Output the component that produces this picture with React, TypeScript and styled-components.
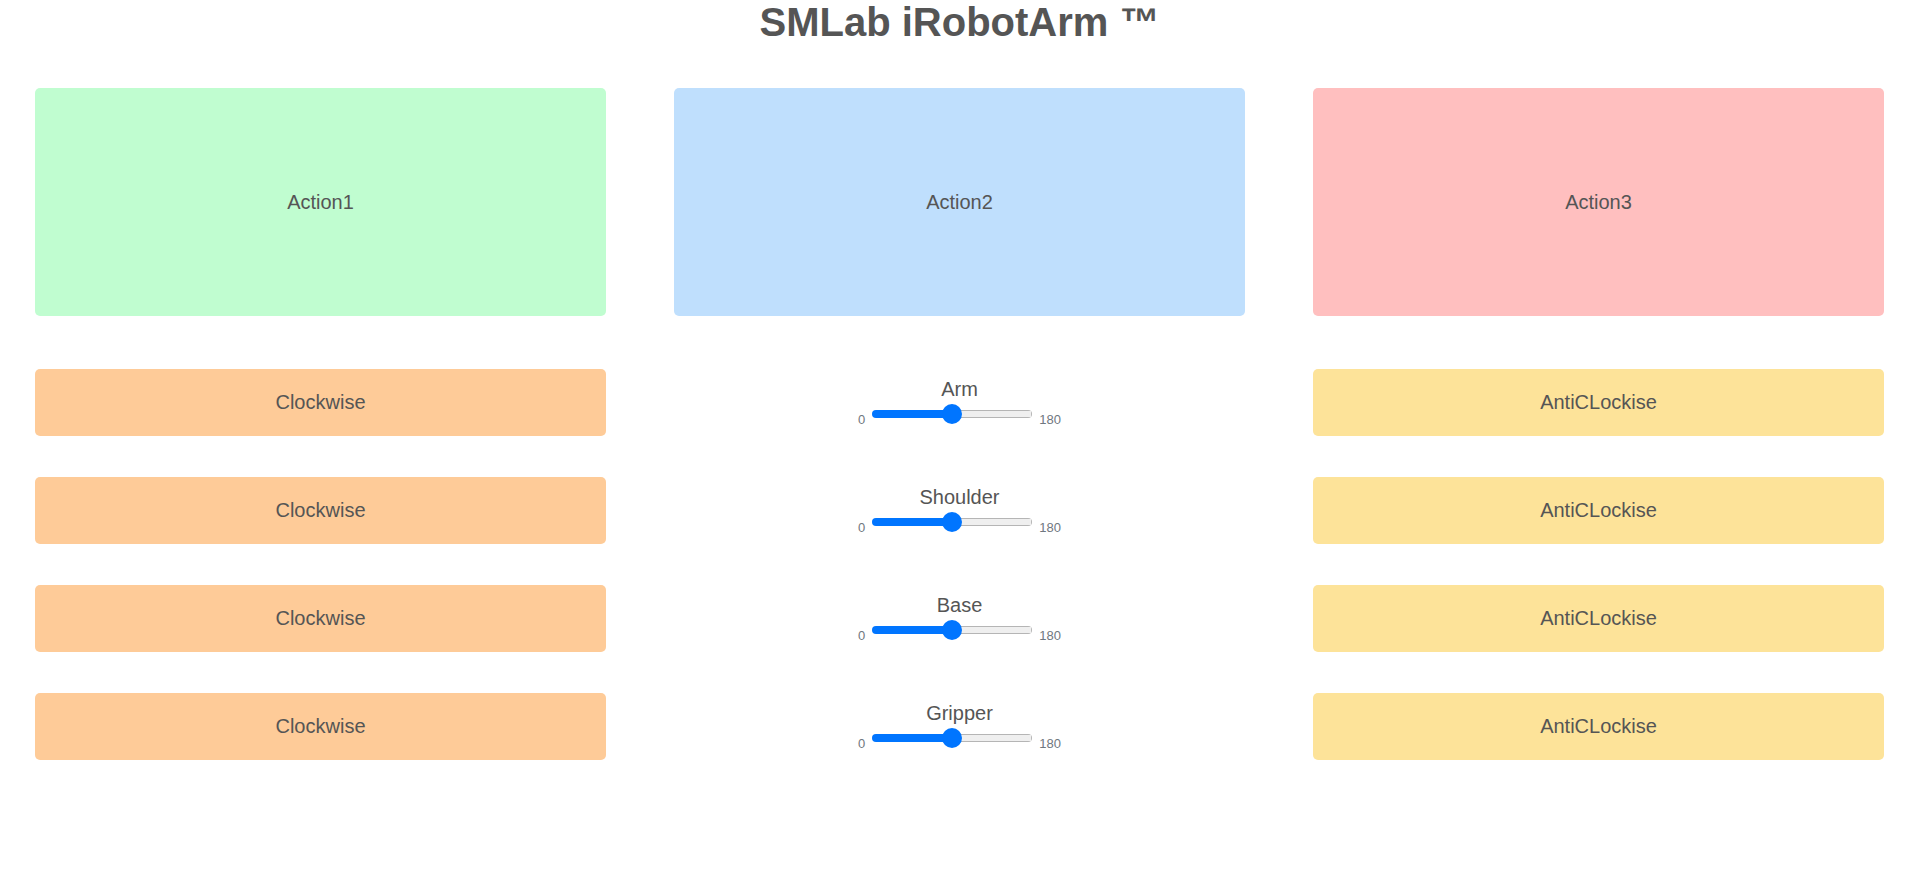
import React from "react";
import styled, { createGlobalStyle } from "styled-components";

const GlobalStyle = createGlobalStyle`
  html, body {
    margin: 0;
    padding: 0;
    background: #ffffff;
    font-family: "Liberation Sans", Arial, sans-serif;
    color: #555555;
  }
  * { box-sizing: border-box; }
`;

const Page = styled.div`
  display: flex;
  flex-direction: column;
  padding: 0 36px 40px 35px;
`;

const Title = styled.h1`
  margin: 0 0 43px 0;
  font-size: 40px;
  font-weight: 700;
  line-height: normal;
  text-align: center;
  color: #555555;
`;

const Grid = styled.div<{ $rowGap: number }>`
  display: grid;
  grid-template-columns: repeat(3, 1fr);
  column-gap: 68px;
  row-gap: ${(p) => p.$rowGap}px;
`;

const ActionCard = styled.button<{ $bg: string }>`
  height: 228px;
  border: none;
  border-radius: 5px;
  background: ${(p) => p.$bg};
  display: flex;
  align-items: center;
  justify-content: center;
  font-family: "Liberation Sans", Arial, sans-serif;
  font-size: 20px;
  color: #555555;
  padding: 0;
  cursor: pointer;
`;

const Controls = styled(Grid)`
  margin-top: 53px;
`;

const RotateButton = styled.button<{ $bg: string }>`
  height: 67px;
  border: none;
  border-radius: 5px;
  background: ${(p) => p.$bg};
  display: flex;
  align-items: center;
  justify-content: center;
  font-family: "Liberation Sans", Arial, sans-serif;
  font-size: 20px;
  color: #555555;
  padding: 0;
  cursor: pointer;
`;

const SliderCell = styled.div`
  display: flex;
  flex-direction: column;
  align-items: center;
  justify-content: center;
  padding-bottom: 2px;
`;

const SliderLabel = styled.div`
  font-size: 20px;
  line-height: 20px;
  color: #555555;
  margin-bottom: 5px;
`;

const SliderRow = styled.div`
  display: flex;
  align-items: flex-end;
  gap: 7px;
`;

const Bound = styled.span`
  font-size: 13px;
  line-height: 15px;
  margin-bottom: -3px;
  color: #6f7780;
`;

const Range = styled.input`
  -webkit-appearance: none;
  appearance: none;
  width: 160px;
  height: 20px;
  margin: 0;
  padding: 0;
  background: transparent;
  display: block;

  &::-webkit-slider-runnable-track {
    height: 8px;
    border-radius: 4px;
    background:
      linear-gradient(#0075ff, #0075ff) left center / var(--fill) 100% no-repeat,
      linear-gradient(#efefef, #efefef) right 1px center / calc(100% - var(--fill) - 1px) 6px no-repeat,
      #b5b5b5;
  }

  &::-webkit-slider-thumb {
    -webkit-appearance: none;
    appearance: none;
    width: 20px;
    height: 20px;
    border-radius: 50%;
    background: #0075ff;
    border: none;
    margin-top: -6px;
  }

  &::-moz-range-track {
    height: 8px;
    border-radius: 4px;
    background: #efefef;
    border: 1px solid #b5b5b5;
  }
  &::-moz-range-progress {
    height: 8px;
    border-radius: 4px;
    background: #0075ff;
  }
  &::-moz-range-thumb {
    width: 20px;
    height: 20px;
    border-radius: 50%;
    background: #0075ff;
    border: none;
  }
`;

type Joint = { name: string; value: number };

const joints: Joint[] = [
  { name: "Arm", value: 90 },
  { name: "Shoulder", value: 90 },
  { name: "Base", value: 90 },
  { name: "Gripper", value: 90 },
];

const JointSlider: React.FC<{ joint: Joint }> = ({ joint }) => {
  const [value, setValue] = React.useState(joint.value);
  const pct = value / 180;
  const fill = `calc(10px + (100% - 20px) * ${pct})`;
  return (
    <SliderCell>
      <SliderLabel>{joint.name}</SliderLabel>
      <SliderRow>
        <Bound>0</Bound>
        <Range
          type="range"
          min={0}
          max={180}
          value={value}
          onChange={(e) => setValue(Number(e.target.value))}
          style={{ ["--fill" as any]: fill }}
        />
        <Bound>180</Bound>
      </SliderRow>
    </SliderCell>
  );
};

export default function App() {
  return (
    <>
      <GlobalStyle />
      <Page>
        <Title>SMLab iRobotArm ™</Title>
        <Grid $rowGap={0}>
          <ActionCard $bg="#c0fdd0">Action1</ActionCard>
          <ActionCard $bg="#bfdffd">Action2</ActionCard>
          <ActionCard $bg="#ffbfbf">Action3</ActionCard>
        </Grid>
        <Controls $rowGap={41}>
          {joints.map((j) => (
            <React.Fragment key={j.name}>
              <RotateButton $bg="#fecb98">Clockwise</RotateButton>
              <JointSlider joint={j} />
              <RotateButton $bg="#fde399">AntiCLockise</RotateButton>
            </React.Fragment>
          ))}
        </Controls>
      </Page>
    </>
  );
}
